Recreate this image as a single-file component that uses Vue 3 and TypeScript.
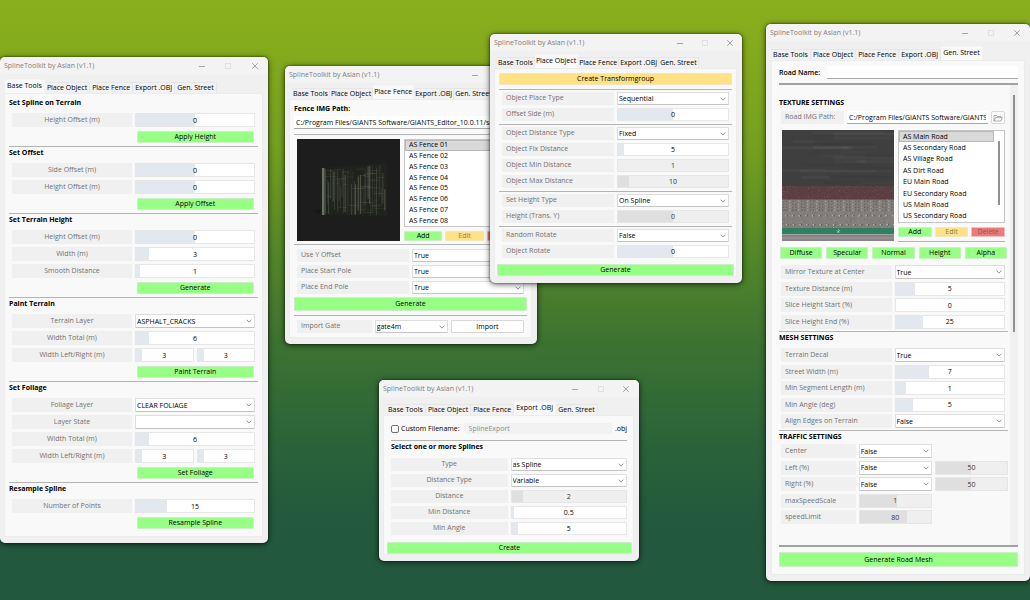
<script setup lang="ts">
import { reactive } from 'vue'

type Control =
  | { kind: 'select'; value: string }
  | { kind: 'number'; value: string; fill: number; off?: boolean }
  | { kind: 'button'; value: string }
  | { kind: 'spacer' }

interface Row {
  label: string
  controls: Control[]
}

type Block =
  | { kind: 'heading'; text: string }
  | { kind: 'rows'; rows: Row[]; mod?: string }
  | { kind: 'action'; text: string; mod?: string }
  | { kind: 'rule'; mod?: string }
  | { kind: 'path'; value: string; name: string }
  | { kind: 'fence' }
  | { kind: 'filename' }
  | { kind: 'road' }

interface Win {
  id: string
  tab: string
  blocks: Block[]
}

const title = 'SplineToolkit by Aslan (v1.1)'
const tabs = ['Base Tools', 'Place Object', 'Place Fence', 'Export .OBJ', 'Gen. Street']

const sel = (value: string): Control => ({ kind: 'select', value })
const num = (value: string, fill = 0, off = false): Control => ({ kind: 'number', value, fill, off })
const spacer: Control = { kind: 'spacer' }
const row = (label: string, ...controls: Control[]): Row => ({ label, controls })

const wins: Win[] = reactive([
  {
    id: 'base',
    tab: 'Base Tools',
    blocks: [
      { kind: 'heading', text: 'Set Spline on Terrain' },
      { kind: 'rows', rows: [row('Height Offset (m)', num('0', 50))] },
      { kind: 'action', text: 'Apply Height' },
      { kind: 'rule' },
      { kind: 'heading', text: 'Set Offset' },
      { kind: 'rows', rows: [row('Side Offset (m)', num('0', 50)), row('Height Offset (m)', num('0', 50))] },
      { kind: 'action', text: 'Apply Offset' },
      { kind: 'rule' },
      { kind: 'heading', text: 'Set Terrain Height' },
      {
        kind: 'rows',
        rows: [
          row('Height Offset (m)', num('0', 50)),
          row('Width (m)', num('3', 11)),
          row('Smooth Distance', num('1', 3)),
        ],
      },
      { kind: 'action', text: 'Generate' },
      { kind: 'rule' },
      { kind: 'heading', text: 'Paint Terrain' },
      {
        kind: 'rows',
        rows: [
          row('Terrain Layer', sel('ASPHALT_CRACKS')),
          row('Width Total (m)', num('6', 11)),
          row('Width Left/Right (m)', num('3', 11), num('3', 11)),
        ],
      },
      { kind: 'action', text: 'Paint Terrain' },
      { kind: 'rule' },
      { kind: 'heading', text: 'Set Foliage' },
      {
        kind: 'rows',
        rows: [
          row('Foliage Layer', sel('CLEAR FOLIAGE')),
          row('Layer State', sel('')),
          row('Width Total (m)', num('6', 11)),
          row('Width Left/Right (m)', num('3', 11), num('3', 11)),
        ],
      },
      { kind: 'action', text: 'Set Foliage' },
      { kind: 'rule' },
      { kind: 'heading', text: 'Resample Spline' },
      { kind: 'rows', rows: [row('Number of Points', num('15', 26))] },
      { kind: 'action', text: 'Resample Spline' },
    ],
  },
  {
    id: 'fence',
    tab: 'Place Fence',
    blocks: [
      { kind: 'heading', text: 'Fence IMG Path:' },
      { kind: 'path', name: 'Fence IMG Path', value: 'C:/Program Files/GIANTS Software/GIANTS_Editor_10.0.11/scripts' },
      { kind: 'rule' },
      { kind: 'fence' },
      { kind: 'rule' },
      {
        kind: 'rows',
        mod: 'options',
        rows: [row('Use Y Offset', sel('True')), row('Place Start Pole', sel('True')), row('Place End Pole', sel('True'))],
      },
      { kind: 'action', text: 'Generate' },
      { kind: 'rule' },
      { kind: 'rows', mod: 'thirds', rows: [row('Import Gate', sel('gate4m'), { kind: 'button', value: 'Import' })] },
    ],
  },
  {
    id: 'object',
    tab: 'Place Object',
    blocks: [
      { kind: 'action', text: 'Create Transformgroup', mod: 'amber' },
      { kind: 'rule' },
      { kind: 'rows', rows: [row('Object Place Type', sel('Sequential')), row('Offset Side (m)', num('0', 50))] },
      { kind: 'rule' },
      {
        kind: 'rows',
        rows: [
          row('Object Distance Type', sel('Fixed')),
          row('Object Fix Distance', num('5', 5)),
          row('Object Min Distance', num('1', 0, true)),
          row('Object Max Distance', num('10', 10, true)),
        ],
      },
      { kind: 'rule' },
      { kind: 'rows', rows: [row('Set Height Type', sel('On Spline')), row('Height (Trans. Y)', num('0', 50, true))] },
      { kind: 'rule' },
      { kind: 'rows', rows: [row('Random Rotate', sel('False')), row('Object Rotate', num('0', 50))] },
      { kind: 'action', text: 'Generate', mod: 'wide' },
    ],
  },
  {
    id: 'export',
    tab: 'Export .OBJ',
    blocks: [
      { kind: 'filename' },
      { kind: 'rule' },
      { kind: 'heading', text: 'Select one or more Splines' },
      {
        kind: 'rows',
        rows: [
          row('Type', sel('as Spline')),
          row('Distance Type', sel('Variable')),
          row('Distance', num('2', 10, true)),
          row('Min Distance', num('0.5', 2)),
          row('Min Angle', num('5', 5)),
        ],
      },
      { kind: 'action', text: 'Create', mod: 'wide' },
    ],
  },
  {
    id: 'street',
    tab: 'Gen. Street',
    blocks: [
      { kind: 'heading', text: 'TEXTURE SETTINGS' },
      { kind: 'road' },
      {
        kind: 'rows',
        mod: 'four',
        rows: [
          row('Mirror Texture at Center', sel('True')),
          row('Texture Distance (m)', num('5', 18)),
          row('Slice Height Start (%)', num('0')),
          row('Slice Height End (%)', num('25', 25)),
        ],
      },
      { kind: 'rule' },
      { kind: 'heading', text: 'MESH SETTINGS' },
      {
        kind: 'rows',
        mod: 'five mesh-rows',
        rows: [
          row('Terrain Decal', sel('True')),
          row('Street Width (m)', num('7', 31)),
          row('Min Segment Length (m)', num('1', 9)),
          row('Min Angle (deg)', num('5', 16)),
          row('Align Edges on Terrain', sel('False')),
        ],
      },
      { kind: 'rule' },
      { kind: 'heading', text: 'TRAFFIC SETTINGS' },
      {
        kind: 'rows',
        mod: 'five thirds',
        rows: [
          row('Center', sel('False'), spacer),
          row('Left (%)', sel('False'), num('50', 50, true)),
          row('Right (%)', sel('False'), num('50', 50, true)),
          row('maxSpeedScale', num('1', 52, true), spacer),
          row('speedLimit', num('80', 66, true), spacer),
        ],
      },
    ],
  },
])

const fences = ['01', '02', '03', '04', '05', '06', '07', '08'].map((n) => `AS Fence ${n}`)
const roads = [
  'AS Main Road',
  'AS Secondary Road',
  'AS Village Road',
  'AS Dirt Road',
  'EU Main Road',
  'EU Secondary Road',
  'US Main Road',
  'US Secondary Road',
]
const maps = ['Diffuse', 'Specular', 'Normal', 'Height', 'Alpha']

let seed = 7
function rnd(): number {
  seed = (seed * 16807) % 2147483647
  return seed / 2147483647
}

const slats = Array.from({ length: 40 }, (_, i) => {
  const x = 28 + i * 1.5 + rnd()
  const k = (x - 24) / 66
  return {
    x,
    y1: 29 - k * 4 + rnd() * rnd() * 30,
    y2: 76 + k * 1 - rnd() * rnd() * 26,
    w: 0.4 + rnd() * 0.6,
    o: 0.1 + rnd() * 0.4,
  }
})
const rails = Array.from({ length: 42 }, () => {
  const x = 27 + rnd() * 52
  return { x, y: 29 + rnd() * 46, w: 3 + rnd() * 10, o: 0.1 + rnd() * 0.25 }
})
const streaks = Array.from({ length: 30 }, () => ({
  x: rnd() * 90 - 10,
  y: rnd() * 53,
  w: 20 + rnd() * 60,
  o: rnd() * 0.045,
  c: rnd() > 0.5 ? '#fff' : '#000',
}))
const specks = Array.from({ length: 800 }, () => ({
  x: Math.floor(rnd() * 112),
  y: 56 + Math.floor(rnd() * 42),
  o: 0.03 + rnd() * 0.09,
  c: rnd() > 0.5 ? '#fff' : '#000',
}))
const studs = Array.from({ length: 17 }, (_, i) => i * 6.7 + 2)
</script>

<template>
  <main class="desktop">
    <section v-for="win in wins" :key="win.id" class="window" :class="win.id" :aria-label="win.tab">
      <header class="titlebar">
        <span class="title">{{ title }}</span>
        <button type="button" class="sys" aria-label="Minimize">
          <svg viewBox="0 0 8 8"><path d="M1 4.5H7" /></svg>
        </button>
        <button type="button" class="sys faint" aria-label="Maximize">
          <svg viewBox="0 0 8 8"><rect x="1.5" y="1.5" width="5" height="5" /></svg>
        </button>
        <button type="button" class="sys" aria-label="Close">
          <svg viewBox="0 0 8 8"><path d="M1.2 1.2L6.8 6.8M6.8 1.2L1.2 6.8" /></svg>
        </button>
      </header>
      <nav class="tabs" role="tablist">
        <button
          v-for="t in tabs"
          :key="t"
          type="button"
          role="tab"
          class="tab"
          :class="{ active: t === win.tab }"
          :aria-selected="t === win.tab"
        >{{ t }}</button>
      </nav>

      <div class="panel">
        <div v-if="win.id === 'street'" class="road-name">
          <label for="road-name">Road Name:</label>
          <input id="road-name" type="text" class="edit" />
        </div>
        <div class="scroller">
          <div class="content">
            <template v-for="(b, bi) in win.blocks" :key="bi">
              <h2 v-if="b.kind === 'heading'" class="heading">{{ b.text }}</h2>

              <hr v-else-if="b.kind === 'rule'" class="rule" />

              <button v-else-if="b.kind === 'action'" type="button" class="btn action" :class="b.mod">{{ b.text }}</button>

              <input v-else-if="b.kind === 'path'" v-model="b.value" type="text" class="edit path" :aria-label="b.name" />

              <div v-else-if="b.kind === 'rows'" class="rows" :class="b.mod">
                <div v-for="(r, ri) in b.rows" :key="r.label" class="row">
                  <label class="label" :for="`${win.id}-${bi}-${ri}-0`">{{ r.label }}</label>
                  <div class="controls">
                    <template v-for="(c, ci) in r.controls" :key="ci">
                      <select
                        v-if="c.kind === 'select'"
                        :id="`${win.id}-${bi}-${ri}-${ci}`"
                        v-model="c.value"
                        class="field select"
                      >
                        <option :value="c.value">{{ c.value }}</option>
                      </select>
                      <input
                        v-else-if="c.kind === 'number'"
                        :id="`${win.id}-${bi}-${ri}-${ci}`"
                        v-model="c.value"
                        type="text"
                        inputmode="decimal"
                        class="field number"
                        :class="{ off: c.off }"
                        :disabled="c.off"
                        :aria-label="r.label"
                        :style="{ '--fill': c.fill + '%' }"
                      />
                      <button v-else-if="c.kind === 'button'" type="button" class="field plain">{{ c.value }}</button>
                      <span v-else class="spacer"></span>
                    </template>
                  </div>
                </div>
              </div>

              <div v-else-if="b.kind === 'filename'" class="filename">
                <input id="custom-name" type="checkbox" class="tick" />
                <label for="custom-name">Custom Filename:</label>
                <input type="text" class="name" value="SplineExport" disabled aria-label="File name" />
                <span>.obj</span>
              </div>

              <div v-else-if="b.kind === 'fence'" class="picker">
                <svg class="preview" viewBox="0 0 103 102" preserveAspectRatio="none" role="img" aria-label="Fence preview">
                  <rect width="103" height="102" fill="#1d1d1d" />
                  <path d="M16 72L25 70V75Z" fill="#171717" />
                  <path d="M24 29L90 24V77L24 76Z" fill="#20221e" />
                  <rect v-for="(s, i) in slats" :key="'s' + i" :x="s.x" :y="s.y1" :width="s.w" :height="s.y2 - s.y1" fill="#8b937c" :opacity="s.o" />
                  <rect v-for="(s, i) in rails" :key="'r' + i" :x="s.x" :y="s.y" :width="s.w" height="0.6" fill="#8b937c" :opacity="s.o" />
                  <path d="M25 29H27.500V76H25Z" fill="#68705e" />
                  <path d="M28 30H28.800V75H28Z" fill="#454b3f" />
                </svg>
                <div class="side">
                  <div class="list">
                    <ul role="listbox" aria-label="Fences">
                      <li v-for="(f, i) in fences" :key="f" role="option" :aria-selected="i === 0" :class="{ on: i === 0 }">{{ f }}</li>
                    </ul>
                  </div>
                  <div class="trio">
                    <button type="button" class="btn">Add</button>
                    <button type="button" class="btn amber" disabled>Edit</button>
                    <button type="button" class="btn red" disabled aria-label="Delete"></button>
                  </div>
                </div>
              </div>

              <template v-else>
                <div class="road-path">
                  <label class="label" for="road-path">Road IMG Path:</label>
                  <input id="road-path" type="text" class="edit" value="C:/Program Files/GIANTS Software/GIANTS_Editor_10.0.11/scripts" />
                  <button type="button" class="browse" aria-label="Browse">
                    <svg viewBox="0 0 10 8"><path d="M1 7V1.5H3.500L4.500 2.500H8V3.700M1 7L2.600 3.700H9.300L8 7Z" /></svg>
                  </button>
                </div>
                <div class="picker">
                  <svg class="preview" viewBox="0 0 112 111" preserveAspectRatio="none" role="img" aria-label="Road texture preview">
                    <rect width="112" height="111" fill="#403f40" />
                    <rect v-for="(s, i) in streaks" :key="'k' + i" :x="s.x" :y="s.y" :width="s.w" height="3" :fill="s.c" :opacity="s.o" />
                    <rect y="56" width="112" height="13.500" fill="#5b3f43" />
                    <rect y="69.500" width="112" height="28.500" fill="#827e7c" />
                    <g v-for="r in 4" :key="'p' + r">
                      <rect v-for="n in 38" :key="n" :x="n * 3 - 2" :y="67.500 + r * 3" width="1.400" height="1.600" :fill="n % 3 ? '#6a5052' : '#b4afac'" opacity=".6" />
                    </g>
                    <g v-for="r in 2" :key="'d' + r" opacity=".65">
                      <rect v-for="x in studs" :key="x" :x="x + r" :y="76 + r * 9" width="1.400" height="1.400" fill="#cfcccb" />
                      <rect v-for="x in studs" :key="'b' + x" :x="x + r + 1.5" :y="76 + r * 9" width="1.200" height="1.400" fill="#4b4847" />
                    </g>
                    <rect v-for="(s, i) in specks" :key="'c' + i" :x="s.x" :y="s.y" width="1" height="1" :fill="s.c" :opacity="s.o" />
                    <rect y="98" width="112" height="6" fill="#2f7f62" />
                    <rect y="104" width="112" height="7" fill="#858383" />
                    <path d="M0 104.500H112M0 108H112" stroke="#a9a7a7" stroke-width=".8" />
                    <path d="M56 99.500L57.500 100.500L55.500 103M55 100.500L57 102.500" stroke="#c8ddd4" stroke-width=".8" fill="none" />
                  </svg>
                  <div class="side">
                    <div class="list">
                      <ul role="listbox" aria-label="Roads">
                        <li v-for="(f, i) in roads" :key="f" role="option" :aria-selected="i === 0" :class="{ on: i === 0 }">{{ f }}</li>
                      </ul>
                      <span class="thumb"></span>
                    </div>
                    <div class="trio">
                      <button type="button" class="btn">Add</button>
                      <button type="button" class="btn amber" disabled>Edit</button>
                      <button type="button" class="btn red" disabled>Delete</button>
                    </div>
                    <hr class="rule" />
                  </div>
                </div>
                <div class="maps">
                  <button v-for="m in maps" :key="m" type="button" class="btn">{{ m }}</button>
                </div>
              </template>
            </template>
          </div>
          <div v-if="win.id === 'street'" class="track"><span class="thumb"></span></div>
        </div>
        <button v-if="win.id === 'street'" type="button" class="btn mesh">Generate Road Mesh</button>
      </div>
    </section>
  </main>
</template>

<style>
html,
body {
  background: #235a3e;
}
</style>

<style scoped>
.desktop {
  position: relative;
  min-height: 100vh;
  overflow: hidden;
  background: linear-gradient(180deg, #8aaf1e 0%, #84ab1d 8%, #749f20 25%, #578a28 40%, #3d7331 57%, #2a6339 74%, #235a3d 86%, #22593d 100%);
  font: 7px/10px "Open Sans", "Noto Sans", sans-serif;
  color: #000;
}

.desktop * {
  box-sizing: border-box;
}

button,
input,
select {
  font: inherit;
  color: inherit;
  margin: 0;
  padding: 0;
  border: 0;
  border-radius: 0;
  min-width: 0;
}

/* windows on the desktop */
.window {
  position: absolute;
  display: flex;
  flex-direction: column;
  padding-bottom: 6px;
  background: #f0f0f0;
  border-radius: 5px;
  box-shadow: 0 0 2px rgba(0, 0, 0, 0.7), 0 1px 6px rgba(0, 0, 0, 0.65);
}

.base { left: 0; top: 57px; width: 268px; }
.fence { left: 285px; top: 66px; width: 252px; }
.object { left: 490px; top: 34px; width: 252px; }
.export { left: 379px; top: 380px; width: 260px; }
.street { left: 766px; top: 24px; width: 264px; }

.titlebar {
  display: flex;
  height: 17px;
  margin-bottom: 5px;
  padding-left: 4px;
  border-radius: 5px 5px 0 0;
  background: #f3f3f3;
}

.title {
  flex: 1;
  line-height: 17px;
  white-space: nowrap;
  color: #7e7e7e;
}

.sys {
  width: 10%;
  display: grid;
  place-items: center;
  background: none;
}

.sys svg {
  width: 8px;
  height: 8px;
  fill: none;
  stroke: #8f8f8f;
  stroke-width: 0.8;
}

.sys.faint svg {
  stroke: #dcdcdc;
}

.tabs {
  display: flex;
  align-items: flex-end;
  height: 14px;
  padding-left: 5px;
}

.tab {
  height: 11px;
  padding: 0 2px;
  line-height: 10px;
  white-space: nowrap;
  background: #f1f1f1;
  border: 1px solid #e6e6e6;
  border-width: 1px 1px 0 0;
}

.tab.active {
  height: 14px;
  padding-bottom: 2px;
  background: #f9f9f9;
  border-color: #f4f4f4;
}

.panel {
  margin: 0 5px 0 4px;
  padding: 3px 4px 4px;
  background: #f9f9f9;
  border: 1px solid #ececec;
}

.fence .tab,
.object .tab {
  padding-left: 1px;
  padding-right: 1px;
}

.fence .tabs,
.object .tabs,
.export .tabs {
  padding-left: 7px;
}

/* shared parts */
.heading {
  margin: 0 0 5px;
  font-size: 7px;
  line-height: 11px;
  font-weight: 700;
}

.rule {
  height: 1px;
  margin: 0;
  border: 0;
  background: #b4b4b4;
}

.rows {
  display: grid;
  align-content: space-between;
  gap: 3px;
  padding: 0 3px;
}

.row {
  display: grid;
  grid-template-columns: minmax(0, 1fr) minmax(0, 1fr);
  gap: 3px;
}

.thirds .row {
  grid-template-columns: minmax(0, 1fr) minmax(0, 2fr);
}

.controls {
  display: grid;
  grid-auto-flow: column;
  grid-auto-columns: minmax(0, 1fr);
  gap: 3px;
}

.label {
  height: 14px;
  padding: 0 4px;
  line-height: 13px;
  white-space: nowrap;
  background: #f0f0f0;
  color: #707070;
}

.base .label,
.export .label {
  text-align: center;
}

.field {
  height: 14px;
  background: #fff;
  border: 1px solid #e6e6e6;
}

.number {
  text-align: center;
  background: linear-gradient(90deg, #e3e8ef var(--fill), #fff var(--fill));
}

.number.off {
  color: #333;
  background: linear-gradient(90deg, #dfdfdf var(--fill), #efefef var(--fill));
}

.select {
  appearance: none;
  padding: 0 9px 0 1px;
  line-height: 11px;
  border-color: #dedede;
  border-bottom-color: #c4c4c4;
  border-radius: 1px;
  background: #fff url("data:image/svg+xml,%3Csvg xmlns='http://www.w3.org/2000/svg' viewBox='0 0 6 4'%3E%3Cpath d='M.6.700L3 3.100L5.400.700' fill='none' stroke='%23777' stroke-width='.8'/%3E%3C/svg%3E") no-repeat right 2px center / 6px 4px;
}

.plain {
  border-color: #d6d6d6;
  border-radius: 1px;
  line-height: 11px;
}

.btn {
  height: 12px;
  line-height: 10px;
  text-align: center;
  background: #98ff86;
  border: 1px solid #c9efc2;
  border-radius: 1px;
}

.amber {
  background: #ffe285;
  border-color: #f2e6bd;
}

.red {
  background: #ea7b7b;
  border-color: #eec0c0;
}

.btn:disabled {
  color: #8d7d4d;
}

.btn.red:disabled {
  color: #a04c4c;
}

.action {
  display: block;
  width: 100%;
}

.edit {
  height: 13px;
  padding: 0 2px;
  background: #fff;
  border-bottom: 1px solid #a8a8a8;
}

.picker {
  display: flex;
  gap: 4px;
}

.preview {
  display: block;
}

.side {
  flex: 1;
  min-width: 0;
  display: flex;
  flex-direction: column;
}

.list {
  display: flex;
  background: #fff;
  border: 1px solid #c6c6c6;
}

.list ul {
  flex: 1;
  display: grid;
  grid-auto-rows: 1fr;
  margin: 0;
  padding: 0;
  list-style: none;
}

.list li {
  display: flex;
  align-items: center;
  padding-left: 4px;
}

.list .on {
  background: #d9d9d9;
  box-shadow: inset 0 0 0 1px #b8b8b8;
}

.trio {
  display: flex;
  gap: 3px;
  margin-top: 4px;
}

.trio .btn {
  flex: 1;
  height: 10px;
  line-height: 8px;
}

/* base tools */
.base .content,
.object .content,
.export .content {
  display: grid;
}

.base .action {
  width: auto;
  margin: 4px 4px 3px calc(50% + 3px);
}

/* place fence */
.fence .titlebar {
  margin-bottom: 2px;
}

.fence .heading {
  margin-bottom: 2px;
}

.fence .field,
.fence .label,
.object .field,
.object .label,
.export .field,
.export .label {
  height: 13px;
  line-height: 12px;
}

.fence .path {
  display: block;
  width: 100%;
  margin-bottom: 5px;
}

.fence .picker {
  padding: 4px 2px 3px 3px;
}

.fence .preview {
  width: 103px;
  height: 102px;
}

.fence .list {
  height: 88px;
}

.options {
  margin: 4px 0 3px;
}

.fence .action {
  height: 14px;
  margin-bottom: 4px;
  line-height: 12px;
}

.fence .thirds {
  margin: 4px 0 0;
}

/* place object */
.object .titlebar {
  margin-bottom: 3px;
}

.object .panel {
  padding: 4px 4px 0;
}

.object .amber {
  margin-bottom: 1px;
}

.object .rule {
  margin: 3px 0 2px;
}

.object .wide {
  width: auto;
  margin: 6px -2px 0;
}

/* export */
.export .titlebar {
  margin-bottom: 4px;
}

.export .panel {
  padding: 7px 6px 0 7px;
}

.filename {
  display: flex;
  align-items: center;
  height: 11px;
  margin-bottom: 6px;
}

.tick {
  appearance: none;
  width: 8px;
  height: 8px;
  margin-right: 2px;
  background: #fff;
  border: 1px solid #6e6e6e;
  border-radius: 2px;
}

.name {
  flex: 1;
  height: 11px;
  margin: 0 3px 0 5px;
  padding: 0 4px;
  color: #8c8c8c;
  background: #f2f2f2;
}

.export .heading {
  margin-bottom: 6px;
}

.export .rows {
  padding: 0;
}

.export .wide {
  width: auto;
  margin: 7px -5px 0 -4px;
}

/* generate street */
.street .panel {
  margin-left: 5px;
  padding: 5px 6px 7px 7px;
}

.road-name {
  display: flex;
  align-items: center;
  padding-bottom: 4px;
  border-bottom: 2px solid #a2a2a2;
}

.road-name label {
  width: 48px;
  font-weight: 600;
}

.road-name .edit {
  flex: 1;
  height: 13px;
}

.scroller {
  display: grid;
}

.street .scroller {
  grid-template-columns: minmax(0, 1fr) 8px;
  gap: 2px;
  border-bottom: 2px solid #a2a2a2;
}

.street .content {
  padding: 12px 0 21px;
}

.track {
  padding: 10px 3px 0;
  background: #f0f0f0;
}

.thumb {
  display: block;
  width: 2px;
  background: #909090;
}

.track .thumb {
  height: 237px;
}

.street .heading {
  margin-bottom: 2px;
}

.road-path {
  display: flex;
  gap: 3px;
  margin: 3px 3px 6px 2px;
}

.road-path .label {
  width: 63px;
  height: 13px;
  line-height: 12px;
}

.road-path .edit {
  flex: 1;
}

.browse {
  display: grid;
  place-items: center;
  width: 14px;
  height: 13px;
  background: #fdfdfd;
  border: 1px solid #d9d9d9;
  border-radius: 2px;
}

.browse svg {
  width: 10px;
  height: 8px;
  fill: none;
  stroke: #8a8a8a;
  stroke-width: 0.7;
}

.street .picker {
  margin: 0 3px 5px;
}

.street .preview {
  width: 112px;
  height: 111px;
}

.street .list {
  height: 93px;
}

.list .thumb {
  height: 64px;
  margin: 10px 4px 0;
}

.street .side .rule {
  margin-top: 4px;
}

.maps {
  display: flex;
  gap: 4px;
  margin: 0 1px 6px;
}

.maps .btn {
  flex: 1;
}

.street .rows {
  padding: 0 3px 0 2px;
  gap: 0;
}

.street .rows.thirds {
  padding-right: 0;
}

.four {
  height: 64px;
  margin-bottom: 2px;
}

.five {
  height: 80px;
}

.mesh-rows {
  margin: 5px 0 2px;
}

.mesh {
  display: block;
  width: 100%;
  height: 15px;
  margin-top: 5px;
  line-height: 13px;
}
</style>
